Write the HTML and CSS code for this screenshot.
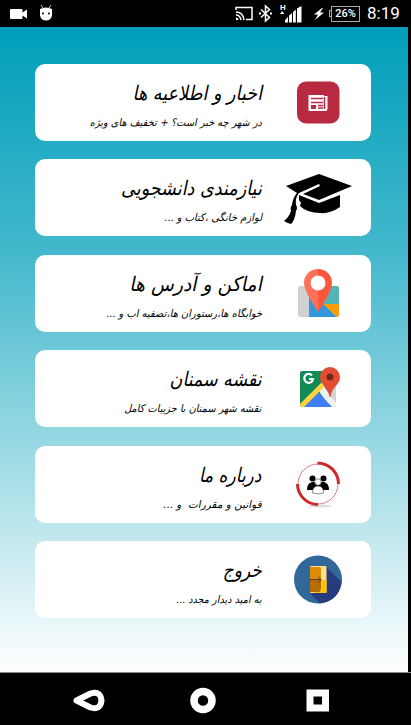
FILE: index.html
```html
<!DOCTYPE html>
<html lang="fa">
<head>
<meta charset="utf-8">
<title>سمنان</title>
<link rel="stylesheet" href="styles.css">
</head>
<body>
<header class="status">
  <svg class="status-left" width="60" height="27" viewBox="0 0 60 27">
    <path fill="#fff" d="M11 9h10.500q1 0 1 1v2.500l4.500-3v9l-4.500-3V18q0 1-1 1H11q-1 0-1-1v-8q0-1 1-1z"/>
    <path fill="#fff" d="M40 9q6-3 12 0v6.500q-1 5-6 5t-6-5z"/>
    <path stroke="#ccc" d="M43 8l-2-3M49 8l2-3"/>
    <circle cx="43" cy="13.500" r="1"/><circle cx="49" cy="13.500" r="1"/>
  </svg>
  <svg class="status-mid" width="97" height="27" viewBox="0 0 97 27">
    <g fill="none" stroke="#fff" stroke-width="1.500">
      <path d="M3 10V7.500h16v12h-6M3 12q7 0 8 8M3 15q4 0 5 5"/>
      <path d="M28 9.500l8.500 8-4 3.500V6l4 3.500-8.500 8"/>
    </g>
    <path fill="#fff" d="M3 17.500q2.500 0 2.500 2.500H3zM26 12.500h2v2h-2zM37 12.500h2v2h-2zM47 14l2.200-3 2.200 3zM52 22.500v-2.500l3-3v5.500zM56 22.500v-7l3-2.500v9.500zM60 22.500V12l2.800-2.500v13zM64 22.500V8.500L68.500 6v16.500zM89 8l-8 6.500h4l-3 5.500 9-7.500h-4l3-4.500z"/>
    <text x="47" y="9.500" class="signal">H</text>
  </svg>
  <span class="nub"></span><span class="battery">26%</span>
  <span class="clock">8:19</span>
</header>

<main class="menu" dir="rtl">
  <section class="card">
    <svg class="icon" viewBox="0 0 76 76">
      <rect x="19" y="17.500" width="42.500" height="42" rx="9" fill="#b92a40"/>
      <path fill="#fff" d="M30.500 31H46v1h3.500v13q0 2-2 2h-17z"/>
      <path fill="none" stroke="#b92a40" stroke-width="1.500" d="M33 34.500h12M33 38.500h12M40 41.500h5M40 44h5M46.500 33v12"/>
      <path fill="#b92a40" d="M33 41h5v4h-5z"/>
    </svg>
    <div class="text"><h2 class="t1">اخبار و اطلاعیه ها</h2><p class="s1">در شهر چه خبر است؟ + تخفیف های ویژه</p></div>
  </section>
  <section class="card">
    <svg class="icon" viewBox="0 0 76 76">
      <path d="M8 27l33-12 33 12-33 14-16-6 17-8-1-2-20 9q-4 5-3 12 2 3 0 6-1 9-5 13-4-1-7-3 5-4 7-10-1-4 1-6 1-8 5-12z"/>
      <path d="M21 36l20 8 21-8v12q-10 7-20 6-13 0-20-7l1-3-2-3z"/>
    </svg>
    <div class="text"><h2 class="t2">نیازمندی دانشجویی</h2><p class="s2">لوازم خانگی ،کتاب و ...</p></div>
  </section>
  <section class="card">
    <svg class="icon" viewBox="0 0 76 76">
      <rect x="20" y="31" width="41" height="31" rx="2" fill="#d0d1d3"/>
      <path fill="#3297dc" d="M31 31h15v18l13 13H31z"/>
      <path fill="#52b5b9" d="M44 31h15q2 0 2 2v16H44z"/>
      <path fill="#ff9d09" d="M45 49h16v11q0 2-2 2z"/>
      <path fill="#ff7058" d="M40 14a14 14 0 0 0-14 14q0 8 14 29z"/>
      <path fill="#ff563d" d="M40 14a14 14 0 0 1 14 14q0 8-14 29z"/>
      <circle cx="40" cy="28" r="7.500" fill="#fff"/>
    </svg>
    <div class="text"><h2 class="t3">اماکن و آدرس ها</h2><p class="s3">خوابگاه ها،رستوران ها،تصفیه اب و ...</p></div>
  </section>
  <section class="card">
    <svg class="icon" viewBox="0 0 76 76">
      <rect x="22" y="21" width="36" height="36" rx="2" fill="#128a56"/>
      <path fill="#d3d3d3" d="M46 33l12-8v30z"/>
      <path fill="#f0f0f0" d="M40 40l5-5 13 18v4h-6z"/>
      <path fill="#3f7ef3" d="M24 57l16-15 14 15z"/>
      <path fill="#ffd33b" d="M22 54l22-22 3 4-21 21h-3l-1-1z"/>
      <path fill="none" stroke="#fff" stroke-width="2.200" d="M34 25.500a4.400 4.400 0 1 0 1 3.500h-4"/>
      <path fill="#e34c32" d="M52 17a10 10 0 0 1 10 10c0 8-8 9-9.500 20h-1C50 36 42 35 42 27a10 10 0 0 1 10-10z"/>
      <circle cx="52" cy="27" r="3.500" fill="#722819"/>
    </svg>
    <div class="text"><h2 class="t4">نقشه سمنان</h2><p class="s4">نقشه شهر سمنان با جزییات کامل</p></div>
  </section>
  <section class="card">
    <svg class="icon" viewBox="0 0 76 76">
      <ellipse cx="42" cy="60" rx="12" ry="1.500" fill="#ddd"/>
      <g fill="none" stroke="#cd292d">
        <circle cx="40" cy="38" r="20" stroke-width=".6"/>
        <path stroke-width="3" d="M39.500 17A21 21 0 0 1 60.500 38M40 58.500A20.500 20.500 0 0 1 19.500 38"/>
      </g>
      <circle cx="34.500" cy="32.500" r="3"/><circle cx="45.500" cy="32.500" r="3"/>
      <path d="M29 44q0-7 5-8h12q5 1 5 8z"/>
      <g fill="#fff" stroke="#444" stroke-width=".6"><path d="M34.500 47q0-7 5.500-7t5.500 7q-5 2-11 0z"/><circle cx="40" cy="36" r="3.200"/></g>
    </svg>
    <div class="text"><h2 class="t5">درباره ما</h2><p class="s5">قوانین و مقررات&nbsp; و ...</p></div>
  </section>
  <section class="card">
    <svg class="icon" viewBox="0 0 76 76">
      <circle cx="40" cy="38.500" r="24" fill="#326799"/>
      <path fill="#263c7e" d="M48 26l15.500 15Q61 60 42 62.500L32 52z"/>
      <rect x="32" y="25" width="16.500" height="27" rx="1" fill="#ffe08a"/>
      <path fill="#ffc10d" d="M42 39h6.500v13H36z"/>
      <path fill="#de8c05" d="M32 26h9q2 0 2 3v10H32z"/>
      <path fill="#b56d05" d="M32 39h11v8q0 4-3 4h-8z"/>
      <path fill="none" stroke="#523b2c" d="M32 38.500h11M40 35.500l3 3-3 3"/>
    </svg>
    <div class="text"><h2 class="t6">خروج</h2><p class="s6">به امید دیدار مجدد ...</p></div>
  </section>
</main>

<nav class="nav">
  <svg width="411" height="52" viewBox="0 0 411 52">
    <g fill="none" stroke="#fff">
      <path stroke-width="6" stroke-linejoin="round" d="M76.500 27.500l14-7q10-3 11 7-1 10-11 7z"/>
      <circle cx="203" cy="27.500" r="9" stroke-width="7.500"/>
      <path stroke-width="7" d="M310 20h15.500v15H310z"/>
    </g>
  </svg>
</nav>
</body>
</html>
```
FILE: styles.css
```css
* { box-sizing: border-box; }
body { margin: 0; width: 411px; height: 725px; overflow: hidden; background: #000; display: flex; flex-direction: column; }
.status { height: 27px; display: flex; align-items: center; color: #fff; font-family: Roboto, sans-serif; }
.status-mid { margin-left: 173px; }
.signal { font: bold 8px Roboto, sans-serif; fill: #fff; }
.nub { width: 2px; height: 7px; margin-left: -1px; border: 1px solid #aaa; border-right: 0; }
.battery { width: 29px; height: 16px; border: 1px solid #aaa; font-size: 11px; font-weight: 500; line-height: 14px; text-align: center; }
.clock { margin-left: 7px; font-size: 17px; line-height: 27px; }
.menu { width: 408px; height: 645px; padding: 37px 37px 0 35px; display: flex; flex-direction: column; gap: 18.4px; background: linear-gradient(#009eba, #46b9cd 36%, #9cdae4 66%, #fff 100%); }
.card { height: 77px; flex: none; display: flex; background: #fff; border-radius: 10px; }
.icon { width: 76px; height: 76px; margin-right: 17px; flex: none; }
.text { flex: 1; padding-right: 16px; color: #000; font-family: "DejaVu Sans", sans-serif; white-space: nowrap; }
h2, p { margin: 0; width: max-content; font-weight: 400; transform-origin: 100% 70%; transform: skewX(-12deg) scaleX(var(--fit)); }
h2 { margin-top: 13px; font-size: 20px; line-height: 32px; }
p { margin-top: 5px; font-size: 10.5px; line-height: 16px; }
.t1 { --fit: .88; }
.t2 { --fit: .88; }
.t3 { --fit: .94; }
.t4 { --fit: .87; }
.t5 { --fit: .85; }
.t6 { --fit: .85; }
.s1 { --fit: .93; }
.s2 { --fit: .95; }
.s3 { --fit: .945; }
.s4 { --fit: .93; }
.s5 { --fit: 1; }
.s6 { --fit: .925; }
.nav { height: 53px; border-top: 1px solid #888; }
.nav svg { display: block; }
```
